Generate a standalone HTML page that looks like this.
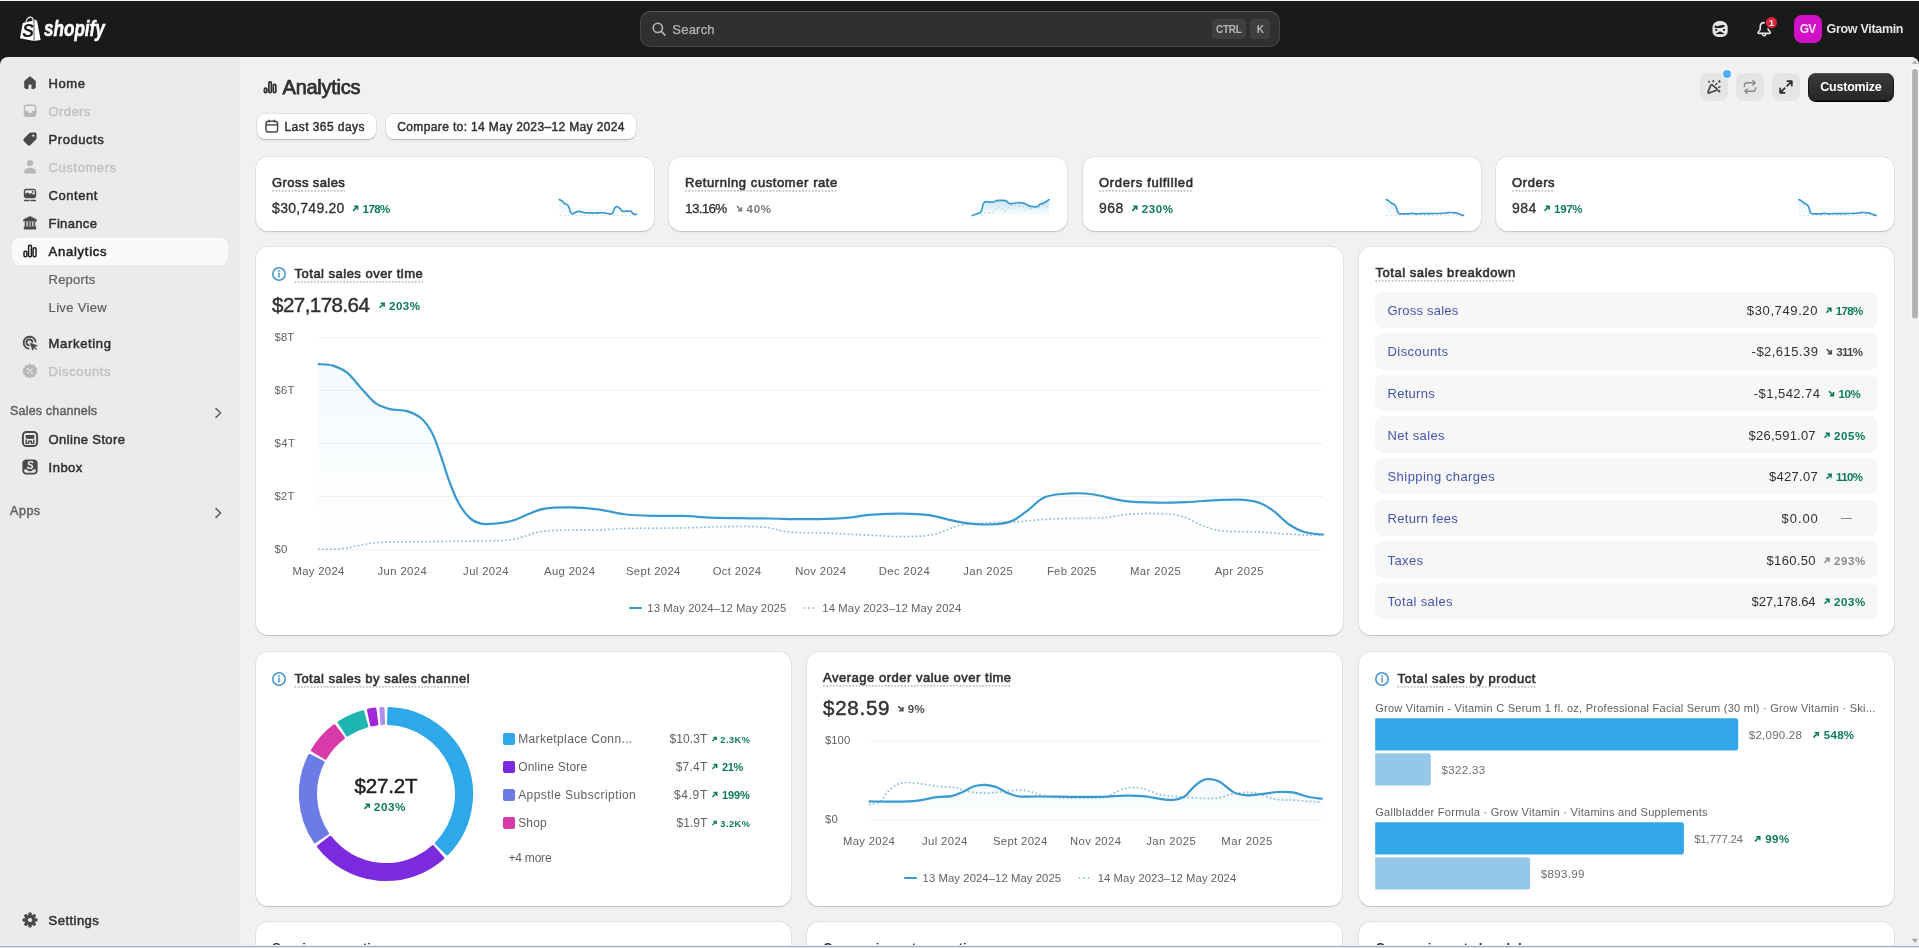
<!DOCTYPE html>
<html lang="en"><head><meta charset="utf-8"><title>Analytics - Shopify</title><style>
*{box-sizing:border-box;margin:0;padding:0}
html,body{width:1919px;height:948px;overflow:hidden;background:#f1f1f1;font-family:"Liberation Sans", sans-serif;}
#root{position:relative;width:1919px;height:948px;overflow:hidden;will-change:transform;}
.t{position:absolute;white-space:nowrap;line-height:1;}
.b{position:absolute;display:block;}
.card{position:absolute;background:#fff;border-radius:12px;box-shadow:0 1px 0 0 rgba(0,0,0,.09),0 0 0 1px rgba(0,0,0,.055),0 2px 3px rgba(0,0,0,.045);}
.dot{position:absolute;height:1.8px;background:repeating-linear-gradient(90deg,#c4c4c4 0,#c4c4c4 1.7px,transparent 1.7px,transparent 3.25px);}
</style></head><body><div id="root">
<div class="b" style="left:0px;top:0px;width:1919px;height:75px;background:#1a1a1a;"></div>
<div class="b" style="left:0px;top:57px;width:240px;height:891px;background:#ebebeb;border-top-left-radius:8px;"></div>
<div class="b" style="left:240px;top:57px;width:1673px;height:891px;background:#f1f1f1;"></div>
<div class="b" style="left:1905px;top:57px;width:14px;height:891px;background:#f1f1f1;border-top-right-radius:8px;"></div>
<header style="display:contents">
<div class="b" style="left:0px;top:0px;width:1919px;height:1px;background:#f6f6fa;"></div>
<svg class="b" style="left:19px;top:16px;" width="22" height="26" viewBox="0 0 22 26"><g transform="translate(0.60 0.40)"><path d="M3.2 6.6 L12.6 4.4 L14.2 3.2 L16.6 3.6 L17.6 5.2 L21 23.6 L14.4 24.6 L0.4 21.8 Z" fill="#fff"/><path d="M6.2 6.0 C6.6 2.6 9.4 0.2 11.6 0.8 C13.2 1.2 13.8 3.2 13.8 5.0" fill="none" stroke="#fff" stroke-width="1.1"/><path d="M14.3 3.3 L14.5 24.5" stroke="#1a1a1a" stroke-width="0.7"/><text x="2.6" y="20.2" font-family="Liberation Sans, sans-serif" font-weight="700" font-style="italic" font-size="17.5" fill="#1a1a1a">S</text></g></svg>
<span class="t" id="t1" style="font-size:20px;top:19.00px;color:#ffffff;font-weight:700;font-style:italic;-webkit-text-stroke:0.5px #ffffff;left:44.20px;transform:scale(0.855,1.07);transform-origin:0 85%;">shopify</span>
<div class="b" style="left:640px;top:11px;width:640px;height:36px;background:#303030;border-radius:10px;border:1px solid #444;border-top-color:#555;"></div>
<svg class="b" style="left:651px;top:21px;" width="16" height="16" viewBox="0 0 16 16"><circle cx="6.8" cy="6.9" r="4.6" fill="none" stroke="#b5b5b5" stroke-width="1.6"/><path d="M10.3 10.4 L14 14.1" stroke="#b5b5b5" stroke-width="1.6" stroke-linecap="round"/></svg>
<span class="t" id="t2" style="font-size:13px;top:23.00px;color:#b5b5b5;-webkit-text-stroke:0.25px #b5b5b5;letter-spacing:0.219px;left:672.30px;">Search</span>
<div class="b" style="left:1212px;top:19.2px;width:33.6px;height:19.6px;background:#3f3f3f;border-radius:4px;"></div>
<span class="t" id="t3" style="font-size:10px;top:25.00px;color:#b5b5b5;font-weight:700;letter-spacing:-0.191px;left:1215.90px;">CTRL</span>
<div class="b" style="left:1250.1px;top:19.2px;width:19.5px;height:19.6px;background:#3f3f3f;border-radius:4px;"></div>
<span class="t" id="t4" style="font-size:10px;top:25.00px;color:#b5b5b5;font-weight:700;left:1256.70px;">K</span>
<svg class="b" style="left:1712px;top:20px;" width="17" height="18" viewBox="0 0 17 18"><g transform="translate(0.10 0.50)"><path d="M8 0.6 C12.4 0.6 15.6 3 15.6 7.4 V10.4 C15.6 14.4 12.6 16.6 8 16.6 C3.4 16.6 0.4 14.4 0.4 10.4 V7.4 C0.4 3 3.6 0.6 8 0.6 Z" fill="#e6e6e6"/><path d="M2.2 6.8 C2.6 5.2 3.4 4.6 4 5.4 C5.4 6.6 8.4 4.2 11.6 4.6 C12.6 4.8 13 5.4 12.4 6 C10 7.6 6 7.8 3 7.2 Z" fill="#1a1a1a"/><circle cx="4.1" cy="9.4" r="1.05" fill="#1a1a1a"/><circle cx="11.9" cy="9.4" r="1.05" fill="#1a1a1a"/><path d="M3.4 12.8 C5 13.2 6.4 11 8 11 C9.6 11 11 13.2 12.6 12.8 C11.4 14.2 9.6 13.4 8 13.4 C6.4 13.4 4.6 14.2 3.4 12.8 Z" fill="#1a1a1a"/><path d="M7.3 14.2 H8.7 V15.6 H7.3 Z" fill="#bdbdbd"/></g></svg>
<svg class="b" style="left:1757px;top:21px;" width="15" height="17" viewBox="0 0 15 17"><g transform="translate(0.00 0.60)"><path d="M7.2 1 C4.6 1 3.2 2.9 3.2 5.4 V7.6 C3.2 9 1 9.8 1 11 C1 11.5 1.4 11.8 1.9 11.8 H12.5 C13 11.8 13.4 11.5 13.4 11 C13.4 9.8 11.2 9 11.2 7.6 V5.4 C11.2 2.9 9.8 1 7.2 1 Z" fill="none" stroke="#e6e6e6" stroke-width="1.6" stroke-linejoin="round"/><path d="M5.6 12 V12.8 C5.6 14.6 8.8 14.6 8.8 12.8 V12" fill="none" stroke="#e6e6e6" stroke-width="1.5" stroke-linecap="round"/></g></svg>
<div class="b" style="left:1765.9px;top:16.5px;width:11.2px;height:11.2px;background:#e0253a;border-radius:5.6px;box-shadow:0 0 0 1.2px #1a1a1a;"></div>
<span class="t" id="t5" style="font-size:9px;top:19.00px;color:#ffffff;font-weight:700;left:1771.40px;transform:translateX(-50%);margin-left:0.00px;">1</span>
<div class="b" style="left:1794px;top:15px;width:28px;height:28px;background:#d011c5;border-radius:8px;"></div>
<span class="t" id="t6" style="font-size:12px;top:23.00px;color:#fbe6fb;font-weight:700;letter-spacing:-0.944px;left:1808.00px;transform:translateX(-50%);margin-left:-0.47px;">GV</span>
<span class="t" id="t7" style="font-size:12.5px;top:23.00px;color:#e3e3e3;font-weight:700;letter-spacing:-0.304px;left:1826.50px;">Grow Vitamin</span>
</header>
<nav style="display:contents" aria-label="Main navigation">
<div class="b" style="left:12px;top:237.5px;width:216px;height:27.5px;background:#fafafa;border-radius:8px;"></div>
<svg class="b" style="left:22px;top:75px;overflow:visible;" width="16" height="16" viewBox="0 0 16 16"><g transform="translate(8 7.70) scale(0.9) translate(-8 -8)"><path d="M8 1.2 L2 6.2 V13 C2 13.9 2.7 14.6 3.6 14.6 H6 V10.6 C6 10 6.4 9.6 7 9.6 H9 C9.6 9.6 10 10 10 10.6 V14.6 H12.4 C13.3 14.6 14 13.9 14 13 V6.2 Z" fill="#4a4a4a" stroke="#4a4a4a" stroke-width="0.8" stroke-linejoin="round"/></g></svg>
<span class="t" id="t8" style="font-size:13px;top:77.00px;color:#303030;-webkit-text-stroke:0.5px #303030;letter-spacing:0.537px;left:48.60px;">Home</span>
<svg class="b" style="left:22px;top:103px;overflow:visible;" width="16" height="16" viewBox="0 0 16 16"><g transform="translate(8 7.80) scale(1.05) translate(-8 -8)"><path d="M4.4 2 H11.6 C12.9 2 14 3.1 14 4.4 V11.6 C14 12.9 12.9 14 11.6 14 H4.4 C3.1 14 2 12.9 2 11.6 V4.4 C2 3.1 3.1 2 4.4 2 Z M3.5 8.2 V4.6 C3.5 4 4 3.5 4.6 3.5 H11.4 C12 3.5 12.5 4 12.5 4.6 V8.2 H10.4 C10 8.2 9.8 8.4 9.7 8.8 C9.5 9.6 8.8 10.1 8 10.1 C7.2 10.1 6.5 9.6 6.3 8.8 C6.2 8.4 6 8.2 5.6 8.2 Z" fill="#b8b8b8" fill-rule="evenodd"/></g></svg>
<span class="t" id="t9" style="font-size:13px;top:105.00px;color:#c3c3c3;-webkit-text-stroke:0.5px #c3c3c3;letter-spacing:0.393px;left:48.60px;">Orders</span>
<svg class="b" style="left:22px;top:131px;overflow:visible;" width="16" height="16" viewBox="0 0 16 16"><g transform="translate(8 8.00) scale(1.1) translate(-8 -8)"><path d="M8.9 2 H12.6 C13.4 2 14 2.6 14 3.4 V7.1 C14 7.6 13.8 8.1 13.4 8.5 L8.4 13.5 C7.7 14.2 6.6 14.2 5.9 13.5 L2.5 10.1 C1.8 9.4 1.8 8.3 2.5 7.6 L7.5 2.6 C7.9 2.2 8.4 2 8.9 2 Z M11 4 A1 1 0 1 0 11 6 A1 1 0 1 0 11 4 Z" fill="#4a4a4a" fill-rule="evenodd"/></g></svg>
<span class="t" id="t10" style="font-size:13px;top:133.00px;color:#303030;-webkit-text-stroke:0.5px #303030;letter-spacing:0.541px;left:48.60px;">Products</span>
<svg class="b" style="left:22px;top:159px;overflow:visible;" width="16" height="16" viewBox="0 0 16 16"><g transform="translate(8 7.60) scale(1.06) translate(-8 -8)"><circle cx="8" cy="4.6" r="2.9" fill="#b8b8b8"/><path d="M2.4 13.2 C2.4 10.6 4.8 9 8 9 C11.2 9 13.6 10.6 13.6 13.2 C13.6 13.9 13.1 14.4 12.4 14.4 H3.6 C2.9 14.4 2.4 13.9 2.4 13.2 Z" fill="#b8b8b8"/></g></svg>
<span class="t" id="t11" style="font-size:13px;top:161.00px;color:#c3c3c3;-webkit-text-stroke:0.5px #c3c3c3;letter-spacing:0.580px;left:48.60px;">Customers</span>
<svg class="b" style="left:22px;top:187px;overflow:visible;" width="16" height="16" viewBox="0 0 16 16"><path d="M4.2 1.8 H11.8 C13.1 1.8 14.2 2.9 14.2 4.2 V8.8 C14.2 10.1 13.1 11.2 11.8 11.2 H4.2 C2.9 11.2 1.8 10.1 1.8 8.8 V4.2 C1.8 2.9 2.9 1.8 4.2 1.8 Z M3.3 7.2 L5.6 5.2 L7.6 6.9 L9.2 5.9 L12.7 8 V4.3 C12.7 3.7 12.3 3.3 11.7 3.3 H4.3 C3.7 3.3 3.3 3.7 3.3 4.3 Z M10.7 3.9 A0.9 0.9 0 1 0 10.7 5.7 A0.9 0.9 0 1 0 10.7 3.9 Z" fill="#4a4a4a" fill-rule="evenodd"/><path d="M2.6 13.6 H7 M9 13.6 H13.4" stroke="#4a4a4a" stroke-width="1.5" stroke-linecap="round"/></svg>
<span class="t" id="t12" style="font-size:13px;top:189.00px;color:#303030;-webkit-text-stroke:0.5px #303030;letter-spacing:0.526px;left:48.60px;">Content</span>
<svg class="b" style="left:22px;top:215px;overflow:visible;" width="16" height="16" viewBox="0 0 16 16"><path d="M8 1.4 L14.4 4.6 V6.2 H1.6 V4.6 Z" fill="#4a4a4a" stroke="#4a4a4a" stroke-width="0.6" stroke-linejoin="round"/><path d="M3.6 6.8 V11 M6.6 6.8 V11 M9.4 6.8 V11 M12.4 6.8 V11" stroke="#4a4a4a" stroke-width="1.7"/><rect x="1.8" y="11.2" width="12.4" height="3.2" rx="0.9" fill="#4a4a4a"/></svg>
<span class="t" id="t13" style="font-size:13px;top:217.00px;color:#303030;-webkit-text-stroke:0.5px #303030;letter-spacing:0.342px;left:48.60px;">Finance</span>
<svg class="b" style="left:22px;top:243px;overflow:visible;" width="16" height="16" viewBox="0 0 16 16"><rect x="2" y="8.2" width="2.9" height="5.6" rx="1.3" fill="none" stroke="#1f1f1f" stroke-width="1.5"/><rect x="6.55" y="2.2" width="2.9" height="11.6" rx="1.3" fill="none" stroke="#1f1f1f" stroke-width="1.5"/><rect x="11.1" y="4.8" width="2.9" height="9" rx="1.3" fill="none" stroke="#1f1f1f" stroke-width="1.5"/></svg>
<span class="t" id="t14" style="font-size:13px;top:245.00px;color:#202020;-webkit-text-stroke:0.5px #202020;letter-spacing:0.746px;left:48.60px;">Analytics</span>
<span class="t" id="t15" style="font-size:13px;top:273.00px;color:#616161;-webkit-text-stroke:0.2px #616161;letter-spacing:0.178px;left:48.60px;">Reports</span>
<span class="t" id="t16" style="font-size:13px;top:301.00px;color:#616161;-webkit-text-stroke:0.2px #616161;letter-spacing:0.324px;left:48.60px;">Live View</span>
<svg class="b" style="left:22px;top:335px;overflow:visible;" width="16" height="16" viewBox="0 0 16 16"><path d="M13.6 6.6 A6 6 0 1 0 6.6 13.6" fill="none" stroke="#4a4a4a" stroke-width="1.9" stroke-linecap="round"/><path d="M10.4 6.8 A3 3 0 1 0 6.8 10.4" fill="none" stroke="#4a4a4a" stroke-width="1.9" stroke-linecap="round"/><path d="M8 8 L15.4 10.6 L12.6 12 L14.8 14.2 L14.2 14.8 L12 12.6 L10.6 15.4 Z" fill="#4a4a4a" stroke="#4a4a4a" stroke-width="0.5" stroke-linejoin="round"/></svg>
<span class="t" id="t17" style="font-size:13px;top:337.00px;color:#303030;-webkit-text-stroke:0.5px #303030;letter-spacing:0.665px;left:48.60px;">Marketing</span>
<svg class="b" style="left:22px;top:363px;overflow:visible;" width="16" height="16" viewBox="0 0 16 16"><path d="M8 0.8 L9.9 2.2 L12.2 2 L12.9 4.3 L14.9 5.5 L14.2 7.8 L15 10 L13.1 11.3 L12.5 13.6 L10.2 13.6 L8.3 15 L6.3 13.7 L4 13.9 L3.2 11.7 L1.2 10.5 L1.8 8.2 L1 6 L2.9 4.7 L3.5 2.4 L5.8 2.4 Z" fill="#b8b8b8" stroke="#b8b8b8" stroke-width="0.8" stroke-linejoin="round"/><path d="M5.8 10.2 L10.2 5.8" stroke="#ebebeb" stroke-width="1.2" stroke-linecap="round"/><circle cx="6" cy="6.1" r="1" fill="#ebebeb"/><circle cx="10" cy="9.9" r="1" fill="#ebebeb"/></svg>
<span class="t" id="t18" style="font-size:13px;top:365.00px;color:#c3c3c3;-webkit-text-stroke:0.5px #c3c3c3;letter-spacing:0.615px;left:48.60px;">Discounts</span>
<span class="t" id="t19" style="font-size:12.5px;top:405.00px;color:#616161;-webkit-text-stroke:0.45px #616161;letter-spacing:0.171px;left:10.10px;">Sales channels</span>
<svg class="b" style="left:212px;top:406px;" width="12" height="14" viewBox="0 0 12 14"><path d="M4 2.6 L8.6 7 L4 11.4" fill="none" stroke="#616161" stroke-width="1.5" stroke-linecap="round" stroke-linejoin="round"/></svg>
<svg class="b" style="left:22px;top:431px;overflow:visible;" width="16" height="16" viewBox="0 0 16 16"><rect x="0.9" y="0.9" width="14.2" height="14.2" rx="3.6" fill="none" stroke="#4a4a4a" stroke-width="2"/><path d="M3.6 4 H12.4 V6.6 C12.4 7.6 11.4 8 10.9 7.4 C10.4 8.2 9.4 8.2 8.9 7.4 C8.4 8.2 7.5 8.2 7 7.4 C6.5 8.2 5.6 8.2 5.1 7.4 C4.6 8 3.6 7.6 3.6 6.6 Z" fill="#4a4a4a"/><path d="M4.2 8.4 V12.4 H6.6 V10.2 H9.4 V12.4 H11.8 V8.4" fill="none" stroke="#4a4a4a" stroke-width="1.4"/></svg>
<span class="t" id="t20" style="font-size:13px;top:433.00px;color:#303030;-webkit-text-stroke:0.5px #303030;letter-spacing:0.367px;left:48.60px;">Online Store</span>
<svg class="b" style="left:22px;top:459px;overflow:visible;" width="16" height="16" viewBox="0 0 16 16"><path d="M4.2 0.4 H11.8 C13.9 0.4 15.6 2.1 15.6 4.2 V11.8 C15.6 13.9 13.9 15.6 11.8 15.6 H4.2 C2.1 15.6 0.4 13.9 0.4 11.8 V4.2 C0.4 2.1 2.1 0.4 4.2 0.4 Z" fill="#4a4a4a"/><path d="M2.2 10.4 H5 C5.4 11.6 6.6 12.2 8 12.2 C9.4 12.2 10.6 11.6 11 10.4 H13.8 V11.8 C13.8 12.9 12.9 13.8 11.8 13.8 H4.2 C3.1 13.8 2.2 12.9 2.2 11.8 Z" fill="#ebebeb"/><text x="4.7" y="9.6" font-family="Liberation Sans, sans-serif" font-weight="700" font-style="italic" font-size="10.4" fill="#ebebeb">S</text></svg>
<span class="t" id="t21" style="font-size:13px;top:461.00px;color:#303030;-webkit-text-stroke:0.5px #303030;letter-spacing:0.472px;left:48.60px;">Inbox</span>
<span class="t" id="t22" style="font-size:12.5px;top:505.00px;color:#616161;-webkit-text-stroke:0.45px #616161;letter-spacing:0.500px;left:10.10px;">Apps</span>
<svg class="b" style="left:212px;top:506px;" width="12" height="14" viewBox="0 0 12 14"><path d="M4 2.6 L8.6 7 L4 11.4" fill="none" stroke="#616161" stroke-width="1.5" stroke-linecap="round" stroke-linejoin="round"/></svg>
<svg class="b" style="left:22px;top:912px;overflow:visible;" width="16" height="16" viewBox="0 0 16 16"><g transform="translate(8 8)"><rect x="-1.7" y="-7.4" width="3.4" height="4" rx="0.9" fill="#4a4a4a" transform="rotate(0)"/><rect x="-1.7" y="-7.4" width="3.4" height="4" rx="0.9" fill="#4a4a4a" transform="rotate(45)"/><rect x="-1.7" y="-7.4" width="3.4" height="4" rx="0.9" fill="#4a4a4a" transform="rotate(90)"/><rect x="-1.7" y="-7.4" width="3.4" height="4" rx="0.9" fill="#4a4a4a" transform="rotate(135)"/><rect x="-1.7" y="-7.4" width="3.4" height="4" rx="0.9" fill="#4a4a4a" transform="rotate(180)"/><rect x="-1.7" y="-7.4" width="3.4" height="4" rx="0.9" fill="#4a4a4a" transform="rotate(225)"/><rect x="-1.7" y="-7.4" width="3.4" height="4" rx="0.9" fill="#4a4a4a" transform="rotate(270)"/><rect x="-1.7" y="-7.4" width="3.4" height="4" rx="0.9" fill="#4a4a4a" transform="rotate(315)"/><circle r="5.2" fill="#4a4a4a"/><circle r="2.1" fill="#ebebeb"/></g></svg>
<span class="t" id="t23" style="font-size:13px;top:914.00px;color:#303030;-webkit-text-stroke:0.5px #303030;letter-spacing:0.459px;left:48.60px;">Settings</span>
</nav>
<main style="display:contents">
<svg class="b" style="left:262px;top:79px;" width="16" height="16" viewBox="0 0 16 16"><g transform="translate(0.50 0.50)"><rect x="1.9" y="8.6" width="2.5" height="4.6" rx="1.2" fill="none" stroke="#303030" stroke-width="1.7"/><rect x="6.35" y="2.3" width="2.5" height="10.9" rx="1.2" fill="none" stroke="#303030" stroke-width="1.7"/><rect x="10.8" y="4.9" width="2.5" height="8.3" rx="1.2" fill="none" stroke="#303030" stroke-width="1.7"/></g></svg>
<span class="t" id="t24" style="font-size:20px;top:77.00px;color:#303030;-webkit-text-stroke:0.75px #303030;letter-spacing:-0.279px;left:282.60px;">Analytics</span>
<div class="b" style="left:257.3px;top:114.3px;width:118.4px;height:25px;background:#ffffff;border-radius:8px;box-shadow:0 1px 0 0 rgba(0,0,0,.12),0 0 0 1px rgba(0,0,0,.065),0 2px 2px rgba(0,0,0,.05);"></div>
<svg class="b" style="left:264px;top:119px;" width="15" height="15" viewBox="0 0 15 15"><g transform="translate(0.80 0.30)"><rect x="1.2" y="2" width="11.6" height="10.8" rx="2.6" fill="none" stroke="#4a4a4a" stroke-width="1.5"/><path d="M1.4 5.6 H12.6" stroke="#4a4a4a" stroke-width="1.4"/><path d="M4.3 0.9 V2.6 M9.7 0.9 V2.6" stroke="#4a4a4a" stroke-width="1.4" stroke-linecap="round"/></g></svg>
<span class="t" id="t25" style="font-size:12px;top:121.00px;color:#303030;-webkit-text-stroke:0.45px #303030;letter-spacing:0.440px;left:284.50px;">Last 365 days</span>
<div class="b" style="left:385.8px;top:114.3px;width:250.4px;height:25px;background:#ffffff;border-radius:8px;box-shadow:0 1px 0 0 rgba(0,0,0,.12),0 0 0 1px rgba(0,0,0,.065),0 2px 2px rgba(0,0,0,.05);"></div>
<span class="t" id="t26" style="font-size:12px;top:121.00px;color:#303030;-webkit-text-stroke:0.45px #303030;letter-spacing:0.364px;left:397.30px;">Compare to: 14 May 2023–12 May 2024</span>
<div class="b" style="left:1700px;top:73px;width:28px;height:27.6px;background:#e5e5e5;border-radius:8px;"></div>
<div class="b" style="left:1736px;top:73px;width:28px;height:27.6px;background:#e5e5e5;border-radius:8px;"></div>
<div class="b" style="left:1772px;top:73px;width:28px;height:27.6px;background:#e5e5e5;border-radius:8px;"></div>
<svg class="b" style="left:1706px;top:79px;" width="16" height="16" viewBox="0 0 16 16"><path d="M4.7 6.4 L2.1 12.9 C1.8 13.7 2.5 14.3 3.2 14 L10.4 11.3 C11.2 11 11.3 10.1 10.7 9.6 L6.2 5.9 C5.7 5.5 4.9 5.7 4.7 6.4 Z" fill="none" stroke="#444" stroke-width="1.7" stroke-linejoin="round"/><circle cx="3.1" cy="2.7" r="0.95" fill="#444"/><path d="M7.4 1.5 L7.1 2.9" stroke="#444" stroke-width="1.4" stroke-linecap="round"/><path d="M10.8 4.5 L9.8 5.5" stroke="#444" stroke-width="1.4" stroke-linecap="round"/><path d="M12.6 8.2 L14 7.9" stroke="#444" stroke-width="1.4" stroke-linecap="round"/><path d="M13.4 0.9 L14.9 2.5 L13.4 4.1 L11.9 2.5 Z" fill="#444"/><path d="M13.1 10.6 L14.7 12.2 L13.1 13.8 L11.5 12.2 Z" fill="#444"/></svg>
<div class="b" style="left:1723.1px;top:70px;width:7.8px;height:7.8px;background:#4fb0f5;border-radius:4px;box-shadow:0 0 0 1.3px #f7f7f7;"></div>
<svg class="b" style="left:1742px;top:79px;" width="16" height="16" viewBox="0 0 16 16"><path d="M2.4 7.4 V6.4 C2.4 4.9 3.6 3.7 5.1 3.7 H13 M10.8 1.4 L13.2 3.7 L10.8 6" fill="none" stroke="#8a8a8a" stroke-width="1.4" stroke-linecap="round" stroke-linejoin="round"/><path d="M13.6 8.6 V9.6 C13.6 11.1 12.4 12.3 10.9 12.3 H3 M5.2 10 L2.8 12.3 L5.2 14.6" fill="none" stroke="#8a8a8a" stroke-width="1.4" stroke-linecap="round" stroke-linejoin="round"/></svg>
<svg class="b" style="left:1778px;top:79px;" width="16" height="16" viewBox="0 0 16 16"><path d="M9.2 6.8 L13.6 2.4 M9.4 2.2 H13.8 V6.6" fill="none" stroke="#303030" stroke-width="1.8" stroke-linecap="round" stroke-linejoin="round"/><path d="M6.8 9.2 L2.4 13.6 M2.2 9.4 V13.8 H6.6" fill="none" stroke="#303030" stroke-width="1.8" stroke-linecap="round" stroke-linejoin="round"/></svg>
<div class="b" style="left:1808px;top:73px;width:86px;height:28px;background:#2b2b2b;border-radius:8px;background:linear-gradient(#3a3a3a,#262626);box-shadow:inset 0 1px 0 rgba(255,255,255,.25),inset 0 0 0 1px rgba(0,0,0,.55),0 1px 0 #000;"></div>
<span class="t" id="t27" style="font-size:12.5px;top:81.00px;color:#ffffff;font-weight:700;letter-spacing:-0.213px;left:1851.00px;transform:translateX(-50%);margin-left:-0.11px;">Customize</span>
<div class="card" style="left:256px;top:157px;width:398px;height:74px"></div>
<span class="t" id="t28" style="font-size:13px;top:176.00px;color:#303030;-webkit-text-stroke:0.6px #303030;letter-spacing:0.406px;left:272.10px;">Gross sales</span>
<svg class="b" style="left:272px;top:190px;" width="73" height="2" viewBox="0 0 73 2"><g transform="translate(0.10 0.00)"><path d="M0 0.9 H72.70" stroke="#c2c2c2" stroke-width="1.8" stroke-dasharray="1.7 1.55"/></g></svg>
<span class="t" id="t29" style="font-size:14px;top:201.00px;color:#303030;-webkit-text-stroke:0.3px #303030;letter-spacing:0.247px;left:272.10px;">$30,749.20</span>
<svg class="b" style="left:352px;top:205px;" width="7" height="7" viewBox="0 0 7 7"><g transform="translate(0.60 0.50)"><path d="M0.9 4.90 L4.50 1.3" fill="none" stroke="#0c7d52" stroke-width="1.55" stroke-linecap="round"/><path d="M1.5 0.8 H5.00 V4.30" fill="none" stroke="#0c7d52" stroke-width="1.65" stroke-linecap="butt" stroke-linejoin="miter"/></g></svg>
<span class="t" id="t30" style="font-size:11.5px;top:204.00px;color:#0c7d52;font-weight:700;letter-spacing:-0.607px;left:362.60px;">178%</span>
<svg class="b" style="left:559px;top:199px;overflow:visible;" width="78" height="19" viewBox="0 0 78 19"><g transform="translate(0.30 0.60)"><defs><linearGradient id="sg559" x1="0" y1="0" x2="0" y2="1"><stop offset="0" stop-color="#4aa6dc" stop-opacity="0.16"/><stop offset="1" stop-color="#4aa6dc" stop-opacity=".02"/></linearGradient></defs><path d="M0.00 0.00C0.39 0.17 1.48 0.39 2.35 1.04C3.22 1.69 4.26 3.21 5.22 3.91C6.17 4.60 7.35 4.60 8.09 5.21C8.82 5.82 9.17 6.47 9.65 7.56C10.13 8.65 10.52 10.69 10.95 11.73C11.39 12.77 11.74 13.42 12.26 13.81C12.78 14.21 13.43 14.25 14.08 14.08C14.74 13.90 15.34 13.16 16.17 12.77C17.00 12.38 18.13 11.86 19.04 11.73C19.95 11.60 20.69 11.77 21.65 11.99C22.60 12.21 23.56 12.82 24.78 13.03C25.99 13.25 27.56 13.22 28.95 13.29C30.34 13.36 31.65 13.45 33.12 13.45C34.60 13.45 36.34 13.35 37.82 13.29C39.30 13.24 40.77 13.14 41.99 13.14C43.21 13.14 43.99 13.14 45.12 13.29C46.25 13.45 47.64 13.90 48.77 14.08C49.90 14.25 51.12 14.47 51.90 14.34C52.68 14.21 52.94 14.16 53.47 13.29C53.99 12.42 54.47 10.15 55.03 9.12C55.60 8.10 56.25 7.45 56.86 7.14C57.47 6.84 58.03 6.97 58.68 7.30C59.33 7.63 60.07 8.43 60.77 9.12C61.46 9.82 62.07 11.03 62.86 11.47C63.64 11.90 64.42 11.73 65.46 11.73C66.51 11.73 68.07 11.49 69.11 11.47C70.16 11.45 70.94 11.19 71.72 11.63C72.51 12.06 72.90 13.54 73.81 14.08C74.72 14.61 76.63 14.73 77.20 14.86L77.20 15.90L0.00 15.90Z" fill="url(#sg559)"/><path d="M0.6 16.10 H77.20" stroke="#b9c3cc" stroke-width="1.1" stroke-dasharray="1.2 2.9"/><path d="M0.00 0.00C0.39 0.17 1.48 0.39 2.35 1.04C3.22 1.69 4.26 3.21 5.22 3.91C6.17 4.60 7.35 4.60 8.09 5.21C8.82 5.82 9.17 6.47 9.65 7.56C10.13 8.65 10.52 10.69 10.95 11.73C11.39 12.77 11.74 13.42 12.26 13.81C12.78 14.21 13.43 14.25 14.08 14.08C14.74 13.90 15.34 13.16 16.17 12.77C17.00 12.38 18.13 11.86 19.04 11.73C19.95 11.60 20.69 11.77 21.65 11.99C22.60 12.21 23.56 12.82 24.78 13.03C25.99 13.25 27.56 13.22 28.95 13.29C30.34 13.36 31.65 13.45 33.12 13.45C34.60 13.45 36.34 13.35 37.82 13.29C39.30 13.24 40.77 13.14 41.99 13.14C43.21 13.14 43.99 13.14 45.12 13.29C46.25 13.45 47.64 13.90 48.77 14.08C49.90 14.25 51.12 14.47 51.90 14.34C52.68 14.21 52.94 14.16 53.47 13.29C53.99 12.42 54.47 10.15 55.03 9.12C55.60 8.10 56.25 7.45 56.86 7.14C57.47 6.84 58.03 6.97 58.68 7.30C59.33 7.63 60.07 8.43 60.77 9.12C61.46 9.82 62.07 11.03 62.86 11.47C63.64 11.90 64.42 11.73 65.46 11.73C66.51 11.73 68.07 11.49 69.11 11.47C70.16 11.45 70.94 11.19 71.72 11.63C72.51 12.06 72.90 13.54 73.81 14.08C74.72 14.61 76.63 14.73 77.20 14.86" fill="none" stroke="#3a9ad0" stroke-width="1.7" stroke-linejoin="round" stroke-linecap="round"/></g></svg>
<div class="card" style="left:669px;top:157px;width:398px;height:74px"></div>
<span class="t" id="t31" style="font-size:13px;top:176.00px;color:#303030;-webkit-text-stroke:0.6px #303030;letter-spacing:0.579px;left:685.10px;">Returning customer rate</span>
<svg class="b" style="left:685px;top:190px;" width="153" height="2" viewBox="0 0 153 2"><g transform="translate(0.10 0.00)"><path d="M0 0.9 H152.20" stroke="#c2c2c2" stroke-width="1.8" stroke-dasharray="1.7 1.55"/></g></svg>
<span class="t" id="t32" style="font-size:13.5px;top:202.00px;color:#303030;-webkit-text-stroke:0.3px #303030;letter-spacing:-0.719px;left:685.10px;">13.16%</span>
<svg class="b" style="left:736px;top:205px;" width="7" height="7" viewBox="0 0 7 7"><g transform="translate(0.50 0.70)"><path d="M0.9 0.9 L4.50 4.50" fill="none" stroke="#7a7a7a" stroke-width="1.55" stroke-linecap="round"/><path d="M1.5 5.00 H5.00 V1.5" fill="none" stroke="#7a7a7a" stroke-width="1.65" stroke-linecap="butt" stroke-linejoin="miter"/></g></svg>
<span class="t" id="t33" style="font-size:11.5px;top:204.00px;color:#7a7a7a;font-weight:700;letter-spacing:0.784px;left:746.50px;">40%</span>
<svg class="b" style="left:972px;top:199px;overflow:visible;" width="78" height="19" viewBox="0 0 78 19"><g transform="translate(0.20 0.60)"><defs><linearGradient id="sg972" x1="0" y1="0" x2="0" y2="1"><stop offset="0" stop-color="#4aa6dc" stop-opacity="0.3"/><stop offset="1" stop-color="#4aa6dc" stop-opacity=".02"/></linearGradient></defs><path d="M0.00 15.90C0.83 15.60 3.61 14.55 4.95 14.08C6.30 13.60 7.30 13.77 8.08 13.03C8.86 12.29 9.17 11.08 9.65 9.64C10.12 8.21 10.43 5.66 10.95 4.43C11.47 3.20 11.77 2.59 12.77 2.24C13.77 1.89 15.55 2.29 16.94 2.35C18.33 2.41 19.90 2.82 21.11 2.61C22.33 2.39 23.03 1.35 24.24 1.04C25.46 0.74 26.85 0.78 28.41 0.78C29.98 0.78 32.41 0.70 33.63 1.04C34.84 1.39 35.02 2.37 35.71 2.87C36.41 3.36 36.76 3.88 37.80 4.01C38.84 4.14 40.75 3.80 41.97 3.65C43.19 3.50 43.88 3.19 45.10 3.13C46.31 3.07 47.88 3.11 49.27 3.28C50.66 3.46 52.40 3.76 53.44 4.17C54.48 4.58 54.66 5.30 55.52 5.73C56.39 6.17 57.44 6.56 58.65 6.78C59.87 6.99 61.69 7.01 62.82 7.04C63.95 7.06 64.56 7.37 65.43 6.93C66.30 6.50 67.08 4.98 68.04 4.43C68.99 3.88 70.21 4.04 71.17 3.65C72.12 3.26 72.82 2.69 73.77 2.09C74.73 1.48 76.38 0.35 76.90 0.00L76.90 15.90L0.00 15.90Z" fill="url(#sg972)"/><path d="M9.12 15.90C9.65 15.47 11.08 13.75 12.25 13.29C13.42 12.84 14.82 13.23 16.16 13.19C17.51 13.15 19.20 13.55 20.33 13.03C21.46 12.51 22.07 11.04 22.94 10.06C23.81 9.08 24.50 7.34 25.55 7.14C26.59 6.94 28.11 8.10 29.20 8.86C30.28 9.63 31.11 11.58 32.06 11.73C33.02 11.88 33.98 10.62 34.93 9.75C35.89 8.88 36.63 7.19 37.80 6.52C38.97 5.85 40.62 5.89 41.97 5.73C43.32 5.58 44.58 5.40 45.88 5.58C47.18 5.75 48.44 6.45 49.79 6.78C51.14 7.11 52.70 7.19 53.96 7.56C55.22 7.93 56.05 8.89 57.35 9.02C58.65 9.15 60.17 8.58 61.78 8.34C63.39 8.10 65.17 7.99 66.99 7.56C68.82 7.12 71.21 5.69 72.73 5.73C74.25 5.78 75.55 7.47 76.12 7.82" fill="none" stroke="#a9bccb" stroke-width="1.1" stroke-dasharray="1.2 2.9"/><path d="M0.00 15.90C0.83 15.60 3.61 14.55 4.95 14.08C6.30 13.60 7.30 13.77 8.08 13.03C8.86 12.29 9.17 11.08 9.65 9.64C10.12 8.21 10.43 5.66 10.95 4.43C11.47 3.20 11.77 2.59 12.77 2.24C13.77 1.89 15.55 2.29 16.94 2.35C18.33 2.41 19.90 2.82 21.11 2.61C22.33 2.39 23.03 1.35 24.24 1.04C25.46 0.74 26.85 0.78 28.41 0.78C29.98 0.78 32.41 0.70 33.63 1.04C34.84 1.39 35.02 2.37 35.71 2.87C36.41 3.36 36.76 3.88 37.80 4.01C38.84 4.14 40.75 3.80 41.97 3.65C43.19 3.50 43.88 3.19 45.10 3.13C46.31 3.07 47.88 3.11 49.27 3.28C50.66 3.46 52.40 3.76 53.44 4.17C54.48 4.58 54.66 5.30 55.52 5.73C56.39 6.17 57.44 6.56 58.65 6.78C59.87 6.99 61.69 7.01 62.82 7.04C63.95 7.06 64.56 7.37 65.43 6.93C66.30 6.50 67.08 4.98 68.04 4.43C68.99 3.88 70.21 4.04 71.17 3.65C72.12 3.26 72.82 2.69 73.77 2.09C74.73 1.48 76.38 0.35 76.90 0.00" fill="none" stroke="#3a9ad0" stroke-width="1.7" stroke-linejoin="round" stroke-linecap="round"/></g></svg>
<div class="card" style="left:1083px;top:157px;width:398px;height:74px"></div>
<span class="t" id="t34" style="font-size:13px;top:176.00px;color:#303030;-webkit-text-stroke:0.6px #303030;letter-spacing:0.666px;left:1099.10px;">Orders fulfilled</span>
<svg class="b" style="left:1099px;top:190px;" width="94" height="2" viewBox="0 0 94 2"><g transform="translate(0.10 0.00)"><path d="M0 0.9 H93.80" stroke="#c2c2c2" stroke-width="1.8" stroke-dasharray="1.7 1.55"/></g></svg>
<span class="t" id="t35" style="font-size:14px;top:201.00px;color:#303030;-webkit-text-stroke:0.3px #303030;letter-spacing:0.470px;left:1099.10px;">968</span>
<svg class="b" style="left:1131px;top:205px;" width="7" height="7" viewBox="0 0 7 7"><g transform="translate(0.80 0.50)"><path d="M0.9 4.90 L4.50 1.3" fill="none" stroke="#0c7d52" stroke-width="1.55" stroke-linecap="round"/><path d="M1.5 0.8 H5.00 V4.30" fill="none" stroke="#0c7d52" stroke-width="1.65" stroke-linecap="butt" stroke-linejoin="miter"/></g></svg>
<span class="t" id="t36" style="font-size:11.5px;top:204.00px;color:#0c7d52;font-weight:700;letter-spacing:0.626px;left:1141.80px;">230%</span>
<svg class="b" style="left:1386px;top:199px;overflow:visible;" width="78" height="19" viewBox="0 0 78 19"><g transform="translate(0.30 0.60)"><defs><linearGradient id="sg1386" x1="0" y1="0" x2="0" y2="1"><stop offset="0" stop-color="#4aa6dc" stop-opacity="0.16"/><stop offset="1" stop-color="#4aa6dc" stop-opacity=".02"/></linearGradient></defs><path d="M0.00 0.00C0.39 0.17 1.52 0.48 2.35 1.04C3.17 1.61 4.00 2.74 4.96 3.39C5.91 4.04 7.30 4.34 8.09 4.95C8.87 5.56 9.17 6.00 9.65 7.04C10.13 8.08 10.52 10.08 10.95 11.21C11.39 12.34 11.61 13.29 12.26 13.81C12.91 14.34 13.39 14.27 14.87 14.34C16.34 14.41 19.39 14.32 21.13 14.23C22.86 14.14 23.82 13.81 25.30 13.81C26.78 13.81 28.34 14.19 29.99 14.23C31.65 14.28 33.04 14.10 35.21 14.08C37.38 14.05 40.43 14.10 43.03 14.08C45.64 14.05 48.68 13.98 50.86 13.92C53.03 13.86 54.42 13.83 56.07 13.71C57.73 13.59 59.38 13.33 60.77 13.19C62.16 13.05 63.03 12.86 64.42 12.88C65.81 12.89 67.81 13.09 69.11 13.29C70.42 13.49 71.29 13.75 72.24 14.08C73.20 14.41 74.03 14.99 74.85 15.27C75.68 15.56 76.81 15.71 77.20 15.80L77.20 15.90L0.00 15.90Z" fill="url(#sg1386)"/><path d="M0.6 16.10 H77.20" stroke="#b9c3cc" stroke-width="1.1" stroke-dasharray="1.2 2.9"/><path d="M0.00 0.00C0.39 0.17 1.52 0.48 2.35 1.04C3.17 1.61 4.00 2.74 4.96 3.39C5.91 4.04 7.30 4.34 8.09 4.95C8.87 5.56 9.17 6.00 9.65 7.04C10.13 8.08 10.52 10.08 10.95 11.21C11.39 12.34 11.61 13.29 12.26 13.81C12.91 14.34 13.39 14.27 14.87 14.34C16.34 14.41 19.39 14.32 21.13 14.23C22.86 14.14 23.82 13.81 25.30 13.81C26.78 13.81 28.34 14.19 29.99 14.23C31.65 14.28 33.04 14.10 35.21 14.08C37.38 14.05 40.43 14.10 43.03 14.08C45.64 14.05 48.68 13.98 50.86 13.92C53.03 13.86 54.42 13.83 56.07 13.71C57.73 13.59 59.38 13.33 60.77 13.19C62.16 13.05 63.03 12.86 64.42 12.88C65.81 12.89 67.81 13.09 69.11 13.29C70.42 13.49 71.29 13.75 72.24 14.08C73.20 14.41 74.03 14.99 74.85 15.27C75.68 15.56 76.81 15.71 77.20 15.80" fill="none" stroke="#3a9ad0" stroke-width="1.7" stroke-linejoin="round" stroke-linecap="round"/></g></svg>
<div class="card" style="left:1496px;top:157px;width:398px;height:74px"></div>
<span class="t" id="t37" style="font-size:13px;top:176.00px;color:#303030;-webkit-text-stroke:0.6px #303030;letter-spacing:0.553px;left:1512.10px;">Orders</span>
<svg class="b" style="left:1512px;top:190px;" width="43" height="2" viewBox="0 0 43 2"><g transform="translate(0.10 0.00)"><path d="M0 0.9 H42.50" stroke="#c2c2c2" stroke-width="1.8" stroke-dasharray="1.7 1.55"/></g></svg>
<span class="t" id="t38" style="font-size:14px;top:201.00px;color:#303030;-webkit-text-stroke:0.3px #303030;letter-spacing:0.470px;left:1512.10px;">984</span>
<svg class="b" style="left:1544px;top:205px;" width="6" height="7" viewBox="0 0 6 7"><g transform="translate(0.10 0.50)"><path d="M0.9 4.90 L4.50 1.3" fill="none" stroke="#0c7d52" stroke-width="1.55" stroke-linecap="round"/><path d="M1.5 0.8 H5.00 V4.30" fill="none" stroke="#0c7d52" stroke-width="1.65" stroke-linecap="butt" stroke-linejoin="miter"/></g></svg>
<span class="t" id="t39" style="font-size:11.5px;top:204.00px;color:#0c7d52;font-weight:700;letter-spacing:-0.341px;left:1554.10px;">197%</span>
<svg class="b" style="left:1798px;top:199px;overflow:visible;" width="79" height="19" viewBox="0 0 79 19"><g transform="translate(0.90 0.60)"><defs><linearGradient id="sg1798" x1="0" y1="0" x2="0" y2="1"><stop offset="0" stop-color="#4aa6dc" stop-opacity="0.16"/><stop offset="1" stop-color="#4aa6dc" stop-opacity=".02"/></linearGradient></defs><path d="M0.00 0.00C0.39 0.17 1.52 0.48 2.35 1.04C3.17 1.61 4.00 2.74 4.96 3.39C5.91 4.04 7.30 4.34 8.09 4.95C8.87 5.56 9.17 6.00 9.65 7.04C10.13 8.08 10.52 10.08 10.95 11.21C11.39 12.34 11.61 13.29 12.26 13.81C12.91 14.34 13.39 14.27 14.87 14.34C16.34 14.41 19.39 14.32 21.13 14.23C22.86 14.14 23.82 13.81 25.30 13.81C26.78 13.81 28.34 14.19 29.99 14.23C31.65 14.28 33.04 14.10 35.21 14.08C37.38 14.05 40.43 14.10 43.03 14.08C45.64 14.05 48.68 13.98 50.86 13.92C53.03 13.86 54.42 13.83 56.07 13.71C57.73 13.59 59.38 13.33 60.77 13.19C62.16 13.05 63.03 12.86 64.42 12.88C65.81 12.89 67.81 13.09 69.11 13.29C70.42 13.49 71.29 13.75 72.24 14.08C73.20 14.41 74.03 14.99 74.85 15.27C75.68 15.56 76.81 15.71 77.20 15.80L77.20 15.90L0.00 15.90Z" fill="url(#sg1798)"/><path d="M0.6 16.10 H77.20" stroke="#b9c3cc" stroke-width="1.1" stroke-dasharray="1.2 2.9"/><path d="M0.00 0.00C0.39 0.17 1.52 0.48 2.35 1.04C3.17 1.61 4.00 2.74 4.96 3.39C5.91 4.04 7.30 4.34 8.09 4.95C8.87 5.56 9.17 6.00 9.65 7.04C10.13 8.08 10.52 10.08 10.95 11.21C11.39 12.34 11.61 13.29 12.26 13.81C12.91 14.34 13.39 14.27 14.87 14.34C16.34 14.41 19.39 14.32 21.13 14.23C22.86 14.14 23.82 13.81 25.30 13.81C26.78 13.81 28.34 14.19 29.99 14.23C31.65 14.28 33.04 14.10 35.21 14.08C37.38 14.05 40.43 14.10 43.03 14.08C45.64 14.05 48.68 13.98 50.86 13.92C53.03 13.86 54.42 13.83 56.07 13.71C57.73 13.59 59.38 13.33 60.77 13.19C62.16 13.05 63.03 12.86 64.42 12.88C65.81 12.89 67.81 13.09 69.11 13.29C70.42 13.49 71.29 13.75 72.24 14.08C73.20 14.41 74.03 14.99 74.85 15.27C75.68 15.56 76.81 15.71 77.20 15.80" fill="none" stroke="#3a9ad0" stroke-width="1.7" stroke-linejoin="round" stroke-linecap="round"/></g></svg>
<div class="card" style="left:256px;top:247px;width:1087px;height:388px"></div>
<svg class="b" style="left:271px;top:266px;" width="16" height="16" viewBox="0 0 16 16"><circle cx="8" cy="8" r="6.2" fill="none" stroke="#4497cd" stroke-width="1.6"/><path d="M8 7.3 V11.1" stroke="#4497cd" stroke-width="1.5" stroke-linecap="round"/><circle cx="8" cy="4.9" r="0.95" fill="#4497cd"/></svg>
<span class="t" id="t40" style="font-size:13px;top:267.00px;color:#303030;-webkit-text-stroke:0.6px #303030;letter-spacing:0.485px;left:294.60px;">Total sales over time</span>
<svg class="b" style="left:294px;top:281px;" width="129" height="2" viewBox="0 0 129 2"><g transform="translate(0.60 0.00)"><path d="M0 0.9 H128.20" stroke="#c2c2c2" stroke-width="1.8" stroke-dasharray="1.7 1.55"/></g></svg>
<span class="t" id="t41" style="font-size:20.5px;top:295.00px;color:#303030;-webkit-text-stroke:0.45px #303030;letter-spacing:-0.545px;left:272.10px;">$27,178.64</span>
<svg class="b" style="left:379px;top:302px;" width="6" height="7" viewBox="0 0 6 7"><g transform="translate(0.10 0.40)"><path d="M0.9 4.90 L4.50 1.3" fill="none" stroke="#0c7d52" stroke-width="1.55" stroke-linecap="round"/><path d="M1.5 0.8 H5.00 V4.30" fill="none" stroke="#0c7d52" stroke-width="1.65" stroke-linecap="butt" stroke-linejoin="miter"/></g></svg>
<span class="t" id="t42" style="font-size:11.5px;top:301.00px;color:#0c7d52;font-weight:700;letter-spacing:0.493px;left:389.10px;">203%</span>
<svg class="b" style="left:256px;top:320px;" width="1080" height="240" viewBox="0 0 1080 240"><path d="M62.0 17.5 H1067.0" stroke="#f0f0f1" stroke-width="1"/><path d="M62.0 70.5 H1067.0" stroke="#f0f0f1" stroke-width="1"/><path d="M62.0 123.5 H1067.0" stroke="#f0f0f1" stroke-width="1"/><path d="M62.0 176.5 H1067.0" stroke="#f0f0f1" stroke-width="1"/><path d="M62.0 229.5 H1067.0" stroke="#f0f0f1" stroke-width="1"/><defs><linearGradient id="mg" gradientUnits="userSpaceOnUse" x1="0" y1="44" x2="0" y2="230"><stop offset="0" stop-color="#3a9ad0" stop-opacity=".055"/><stop offset="1" stop-color="#3a9ad0" stop-opacity="0"/></linearGradient></defs><path d="M62.70 44.10C65.07 44.35 72.17 44.17 76.90 45.60C81.63 47.03 86.35 48.90 91.10 52.70C95.85 56.50 100.65 63.32 105.40 68.40C110.15 73.48 114.85 79.75 119.60 83.20C124.35 86.65 128.67 87.78 133.90 89.10C139.13 90.42 145.78 89.57 151.00 91.10C156.22 92.63 160.93 94.50 165.20 98.30C169.47 102.10 173.28 107.50 176.60 113.90C179.92 120.30 182.25 128.63 185.10 136.70C187.95 144.77 190.85 154.70 193.70 162.30C196.55 169.90 198.88 176.37 202.20 182.30C205.52 188.23 209.80 194.35 213.60 197.90C217.40 201.45 220.73 202.65 225.00 203.60C229.27 204.55 233.98 204.07 239.20 203.60C244.42 203.13 250.60 202.45 256.30 200.80C262.00 199.15 268.17 195.70 273.40 193.70C278.63 191.70 281.05 189.85 287.70 188.80C294.35 187.75 304.28 187.30 313.30 187.40C322.32 187.50 332.30 188.22 341.80 189.40C351.30 190.58 360.82 193.42 370.30 194.50C379.78 195.58 389.22 195.67 398.70 195.90C408.18 196.13 417.70 195.60 427.20 195.90C436.70 196.20 446.20 197.32 455.70 197.70C465.20 198.08 474.70 198.07 484.20 198.20C493.70 198.33 501.27 198.33 512.70 198.50C524.13 198.67 540.48 199.27 552.80 199.20C565.12 199.13 575.97 198.85 586.60 198.10C597.23 197.35 606.60 195.45 616.60 194.70C626.60 193.95 637.22 193.53 646.60 193.60C655.98 193.67 663.52 193.72 672.90 195.10C682.28 196.48 693.52 200.33 702.90 201.90C712.28 203.47 720.75 204.50 729.20 204.50C737.65 204.50 746.72 204.08 753.60 201.90C760.48 199.72 764.57 195.53 770.50 191.40C776.43 187.27 781.70 180.10 789.20 177.10C796.70 174.10 807.37 173.83 815.50 173.40C823.63 172.97 829.25 173.25 838.00 174.50C846.75 175.75 857.37 179.53 868.00 180.90C878.63 182.27 891.17 182.52 901.80 182.70C912.43 182.88 921.80 182.43 931.80 182.00C941.80 181.57 953.05 180.48 961.80 180.10C970.55 179.72 977.42 179.27 984.30 179.70C991.18 180.13 997.47 180.75 1003.10 182.70C1008.73 184.65 1013.10 187.77 1018.10 191.40C1023.10 195.03 1028.10 201.07 1033.10 204.50C1038.10 207.93 1042.47 210.32 1048.10 212.00C1053.73 213.68 1063.77 214.17 1066.90 214.60L1066.90 229.50L62.70 229.50Z" fill="url(#mg)"/><path d="M62.70 229.30C66.48 229.20 78.77 229.32 85.40 228.70C92.03 228.08 96.80 226.60 102.50 225.60C108.20 224.60 112.95 223.32 119.60 222.70C126.25 222.08 129.10 222.13 142.40 221.90C155.70 221.67 181.37 221.58 199.40 221.30C217.43 221.02 239.22 221.00 250.60 220.20C261.98 219.40 262.00 217.93 267.70 216.50C273.40 215.07 278.15 212.65 284.80 211.60C291.45 210.55 298.10 210.48 307.60 210.20C317.10 209.92 331.35 210.18 341.80 209.90C352.25 209.62 356.07 208.83 370.30 208.50C384.53 208.17 410.58 208.23 427.20 207.90C443.82 207.57 456.70 206.63 470.00 206.50C483.30 206.37 496.33 206.18 507.00 207.10C517.67 208.02 523.23 211.00 534.00 212.00C544.77 213.00 559.08 212.60 571.60 213.10C584.12 213.60 596.60 214.43 609.10 215.00C621.60 215.57 635.33 216.57 646.60 216.50C657.87 216.43 667.32 216.42 676.70 214.60C686.08 212.78 694.15 207.53 702.90 205.60C711.65 203.67 719.82 203.62 729.20 203.00C738.58 202.38 747.95 202.58 759.20 201.90C770.45 201.22 782.32 199.58 796.70 198.90C811.08 198.22 832.98 198.55 845.50 197.80C858.02 197.05 862.42 195.10 871.80 194.40C881.18 193.70 893.05 193.35 901.80 193.60C910.55 193.85 916.80 193.90 924.30 195.90C931.80 197.90 939.92 203.10 946.80 205.60C953.68 208.10 956.22 209.83 965.60 210.90C974.98 211.97 990.60 211.38 1003.10 212.00C1015.60 212.62 1029.97 214.03 1040.60 214.60C1051.23 215.17 1062.52 215.27 1066.90 215.40" fill="none" stroke="#94bfda" stroke-width="1.9" stroke-dasharray="0.1 3.9" stroke-linecap="round"/><path d="M62.70 44.10C65.07 44.35 72.17 44.17 76.90 45.60C81.63 47.03 86.35 48.90 91.10 52.70C95.85 56.50 100.65 63.32 105.40 68.40C110.15 73.48 114.85 79.75 119.60 83.20C124.35 86.65 128.67 87.78 133.90 89.10C139.13 90.42 145.78 89.57 151.00 91.10C156.22 92.63 160.93 94.50 165.20 98.30C169.47 102.10 173.28 107.50 176.60 113.90C179.92 120.30 182.25 128.63 185.10 136.70C187.95 144.77 190.85 154.70 193.70 162.30C196.55 169.90 198.88 176.37 202.20 182.30C205.52 188.23 209.80 194.35 213.60 197.90C217.40 201.45 220.73 202.65 225.00 203.60C229.27 204.55 233.98 204.07 239.20 203.60C244.42 203.13 250.60 202.45 256.30 200.80C262.00 199.15 268.17 195.70 273.40 193.70C278.63 191.70 281.05 189.85 287.70 188.80C294.35 187.75 304.28 187.30 313.30 187.40C322.32 187.50 332.30 188.22 341.80 189.40C351.30 190.58 360.82 193.42 370.30 194.50C379.78 195.58 389.22 195.67 398.70 195.90C408.18 196.13 417.70 195.60 427.20 195.90C436.70 196.20 446.20 197.32 455.70 197.70C465.20 198.08 474.70 198.07 484.20 198.20C493.70 198.33 501.27 198.33 512.70 198.50C524.13 198.67 540.48 199.27 552.80 199.20C565.12 199.13 575.97 198.85 586.60 198.10C597.23 197.35 606.60 195.45 616.60 194.70C626.60 193.95 637.22 193.53 646.60 193.60C655.98 193.67 663.52 193.72 672.90 195.10C682.28 196.48 693.52 200.33 702.90 201.90C712.28 203.47 720.75 204.50 729.20 204.50C737.65 204.50 746.72 204.08 753.60 201.90C760.48 199.72 764.57 195.53 770.50 191.40C776.43 187.27 781.70 180.10 789.20 177.10C796.70 174.10 807.37 173.83 815.50 173.40C823.63 172.97 829.25 173.25 838.00 174.50C846.75 175.75 857.37 179.53 868.00 180.90C878.63 182.27 891.17 182.52 901.80 182.70C912.43 182.88 921.80 182.43 931.80 182.00C941.80 181.57 953.05 180.48 961.80 180.10C970.55 179.72 977.42 179.27 984.30 179.70C991.18 180.13 997.47 180.75 1003.10 182.70C1008.73 184.65 1013.10 187.77 1018.10 191.40C1023.10 195.03 1028.10 201.07 1033.10 204.50C1038.10 207.93 1042.47 210.32 1048.10 212.00C1053.73 213.68 1063.77 214.17 1066.90 214.60" fill="none" stroke="#3a9ad0" stroke-width="2.2" stroke-linecap="round" stroke-linejoin="round"/></svg>
<span class="t" id="t43" style="font-size:11.3px;top:332.00px;color:#616161;letter-spacing:0.066px;left:274.60px;">$8T</span>
<span class="t" id="t44" style="font-size:11.3px;top:385.00px;color:#616161;letter-spacing:0.216px;left:274.60px;">$6T</span>
<span class="t" id="t45" style="font-size:11.3px;top:438.00px;color:#616161;letter-spacing:0.366px;left:274.60px;">$4T</span>
<span class="t" id="t46" style="font-size:11.3px;top:491.00px;color:#616161;letter-spacing:0.216px;left:274.60px;">$2T</span>
<span class="t" id="t47" style="font-size:11.3px;top:544.00px;color:#616161;letter-spacing:0.222px;left:274.60px;">$0</span>
<span class="t" id="t48" style="font-size:11.3px;top:566.00px;color:#616161;letter-spacing:0.325px;left:318.40px;transform:translateX(-50%);margin-left:0.16px;">May 2024</span>
<span class="t" id="t49" style="font-size:11.3px;top:566.00px;color:#616161;letter-spacing:0.417px;left:402.10px;transform:translateX(-50%);margin-left:0.21px;">Jun 2024</span>
<span class="t" id="t50" style="font-size:11.3px;top:566.00px;color:#616161;letter-spacing:0.383px;left:485.80px;transform:translateX(-50%);margin-left:0.19px;">Jul 2024</span>
<span class="t" id="t51" style="font-size:11.3px;top:566.00px;color:#616161;letter-spacing:0.361px;left:569.50px;transform:translateX(-50%);margin-left:0.18px;">Aug 2024</span>
<span class="t" id="t52" style="font-size:11.3px;top:566.00px;color:#616161;letter-spacing:0.361px;left:653.20px;transform:translateX(-50%);margin-left:0.18px;">Sept 2024</span>
<span class="t" id="t53" style="font-size:11.3px;top:566.00px;color:#616161;letter-spacing:0.363px;left:736.90px;transform:translateX(-50%);margin-left:0.18px;">Oct 2024</span>
<span class="t" id="t54" style="font-size:11.3px;top:566.00px;color:#616161;letter-spacing:0.363px;left:820.60px;transform:translateX(-50%);margin-left:0.18px;">Nov 2024</span>
<span class="t" id="t55" style="font-size:11.3px;top:566.00px;color:#616161;letter-spacing:0.363px;left:904.30px;transform:translateX(-50%);margin-left:0.18px;">Dec 2024</span>
<span class="t" id="t56" style="font-size:11.3px;top:566.00px;color:#616161;letter-spacing:0.417px;left:988.00px;transform:translateX(-50%);margin-left:0.21px;">Jan 2025</span>
<span class="t" id="t57" style="font-size:11.3px;top:566.00px;color:#616161;letter-spacing:0.236px;left:1071.70px;transform:translateX(-50%);margin-left:0.12px;">Feb 2025</span>
<span class="t" id="t58" style="font-size:11.3px;top:566.00px;color:#616161;letter-spacing:0.452px;left:1155.40px;transform:translateX(-50%);margin-left:0.23px;">Mar 2025</span>
<span class="t" id="t59" style="font-size:11.3px;top:566.00px;color:#616161;letter-spacing:0.434px;left:1239.10px;transform:translateX(-50%);margin-left:0.22px;">Apr 2025</span>
<div class="b" style="left:629px;top:607.2px;width:12.5px;height:2px;background:#3a9ad0;border-radius:1px;"></div>
<span class="t" id="t60" style="font-size:11.3px;top:603.00px;color:#616161;letter-spacing:0.094px;left:647.30px;">13 May 2024–12 May 2025</span>
<svg class="b" style="left:803px;top:606px;" width="14" height="4" viewBox="0 0 14 4"><path d="M1.5 2 H13" stroke="#94bfda" stroke-width="1.8" stroke-dasharray="0.1 4.4" stroke-linecap="round"/></svg>
<span class="t" id="t61" style="font-size:11.3px;top:603.00px;color:#616161;letter-spacing:0.094px;left:822.30px;">14 May 2023–12 May 2024</span>
<div class="card" style="left:1359px;top:247px;width:535px;height:388px"></div>
<span class="t" id="t62" style="font-size:13px;top:266.00px;color:#303030;-webkit-text-stroke:0.6px #303030;letter-spacing:0.558px;left:1375.40px;">Total sales breakdown</span>
<svg class="b" style="left:1375px;top:280px;" width="141" height="2" viewBox="0 0 141 2"><g transform="translate(0.40 0.00)"><path d="M0 0.9 H139.80" stroke="#c2c2c2" stroke-width="1.8" stroke-dasharray="1.7 1.55"/></g></svg>
<div class="b" style="left:1375px;top:291.5px;width:502.7px;height:36.5px;background:#f7f7f7;border-radius:8px;"></div>
<span class="t" id="t63" style="font-size:13px;top:304.00px;color:#4555aa;letter-spacing:0.216px;left:1387.50px;">Gross sales</span>
<span class="t" id="t64" style="font-size:13px;top:304.00px;color:#303030;letter-spacing:0.614px;right:100.94px;">$30,749.20</span>
<svg class="b" style="left:1825px;top:307px;" width="7" height="7" viewBox="0 0 7 7"><g transform="translate(0.85 0.40)"><path d="M0.9 4.90 L4.50 1.3" fill="none" stroke="#0c7d52" stroke-width="1.55" stroke-linecap="round"/><path d="M1.5 0.8 H5.00 V4.30" fill="none" stroke="#0c7d52" stroke-width="1.65" stroke-linecap="butt" stroke-linejoin="miter"/></g></svg>
<span class="t" id="t65" style="font-size:11.5px;top:306.00px;color:#0c7d52;font-weight:700;letter-spacing:-0.641px;left:1835.85px;">178%</span>
<div class="b" style="left:1375px;top:333.1px;width:502.7px;height:36.5px;background:#f7f7f7;border-radius:8px;"></div>
<span class="t" id="t66" style="font-size:13px;top:345.00px;color:#4555aa;letter-spacing:0.440px;left:1387.50px;">Discounts</span>
<span class="t" id="t67" style="font-size:13px;top:345.00px;color:#303030;letter-spacing:0.459px;right:100.64px;">-$2,615.39</span>
<svg class="b" style="left:1826px;top:348px;" width="7" height="7" viewBox="0 0 7 7"><g transform="translate(0.30 0.60)"><path d="M0.9 0.9 L4.50 4.50" fill="none" stroke="#4a4a4a" stroke-width="1.55" stroke-linecap="round"/><path d="M1.5 5.00 H5.00 V1.5" fill="none" stroke="#4a4a4a" stroke-width="1.65" stroke-linecap="butt" stroke-linejoin="miter"/></g></svg>
<span class="t" id="t68" style="font-size:11.5px;top:347.00px;color:#4a4a4a;font-weight:700;letter-spacing:-0.727px;left:1836.30px;">311%</span>
<div class="b" style="left:1375px;top:374.7px;width:502.7px;height:36.5px;background:#f7f7f7;border-radius:8px;"></div>
<span class="t" id="t69" style="font-size:13px;top:387.00px;color:#4555aa;letter-spacing:0.278px;left:1387.50px;">Returns</span>
<span class="t" id="t70" style="font-size:13px;top:387.00px;color:#303030;letter-spacing:0.459px;right:98.49px;">-$1,542.74</span>
<svg class="b" style="left:1828px;top:390px;" width="7" height="7" viewBox="0 0 7 7"><g transform="translate(0.45 0.60)"><path d="M0.9 0.9 L4.50 4.50" fill="none" stroke="#0c7d52" stroke-width="1.55" stroke-linecap="round"/><path d="M1.5 5.00 H5.00 V1.5" fill="none" stroke="#0c7d52" stroke-width="1.65" stroke-linecap="butt" stroke-linejoin="miter"/></g></svg>
<span class="t" id="t71" style="font-size:11.5px;top:389.00px;color:#0c7d52;font-weight:700;letter-spacing:-0.366px;left:1838.45px;">10%</span>
<div class="b" style="left:1375px;top:416.3px;width:502.7px;height:36.5px;background:#f7f7f7;border-radius:8px;"></div>
<span class="t" id="t72" style="font-size:13px;top:429.00px;color:#4555aa;letter-spacing:0.350px;left:1387.50px;">Net sales</span>
<span class="t" id="t73" style="font-size:13px;top:429.00px;color:#303030;letter-spacing:0.214px;right:103.19px;">$26,591.07</span>
<svg class="b" style="left:1824px;top:432px;" width="6" height="7" viewBox="0 0 6 7"><g transform="translate(0.00 0.40)"><path d="M0.9 4.90 L4.50 1.3" fill="none" stroke="#0c7d52" stroke-width="1.55" stroke-linecap="round"/><path d="M1.5 0.8 H5.00 V4.30" fill="none" stroke="#0c7d52" stroke-width="1.65" stroke-linecap="butt" stroke-linejoin="miter"/></g></svg>
<span class="t" id="t74" style="font-size:11.5px;top:431.00px;color:#0c7d52;font-weight:700;letter-spacing:0.593px;left:1834.00px;">205%</span>
<div class="b" style="left:1375px;top:457.9px;width:502.7px;height:36.5px;background:#f7f7f7;border-radius:8px;"></div>
<span class="t" id="t75" style="font-size:13px;top:470.00px;color:#4555aa;letter-spacing:0.449px;left:1387.50px;">Shipping charges</span>
<span class="t" id="t76" style="font-size:13px;top:470.00px;color:#303030;letter-spacing:0.300px;right:101.00px;">$427.07</span>
<svg class="b" style="left:1826px;top:473px;" width="6" height="7" viewBox="0 0 6 7"><g transform="translate(0.10 0.40)"><path d="M0.9 4.90 L4.50 1.3" fill="none" stroke="#0c7d52" stroke-width="1.55" stroke-linecap="round"/><path d="M1.5 0.8 H5.00 V4.30" fill="none" stroke="#0c7d52" stroke-width="1.65" stroke-linecap="butt" stroke-linejoin="miter"/></g></svg>
<span class="t" id="t77" style="font-size:11.5px;top:472.00px;color:#0c7d52;font-weight:700;letter-spacing:-0.594px;left:1836.10px;">110%</span>
<div class="b" style="left:1375px;top:499.5px;width:502.7px;height:36.5px;background:#f7f7f7;border-radius:8px;"></div>
<span class="t" id="t78" style="font-size:13px;top:512.00px;color:#4555aa;letter-spacing:0.300px;left:1387.50px;">Return fees</span>
<span class="t" id="t79" style="font-size:13px;top:512.00px;color:#303030;letter-spacing:0.913px;right:100.29px;">$0.00</span>
<div class="b" style="left:1841px;top:517.6px;width:11px;height:1.4px;background:#8a8a8a;"></div>
<div class="b" style="left:1375px;top:541.1px;width:502.7px;height:36.5px;background:#f7f7f7;border-radius:8px;"></div>
<span class="t" id="t80" style="font-size:13px;top:554.00px;color:#4555aa;letter-spacing:0.408px;left:1387.50px;">Taxes</span>
<span class="t" id="t81" style="font-size:13px;top:554.00px;color:#303030;letter-spacing:0.350px;right:103.05px;">$160.50</span>
<svg class="b" style="left:1824px;top:557px;" width="6" height="7" viewBox="0 0 6 7"><g transform="translate(0.00 0.40)"><path d="M0.9 4.90 L4.50 1.3" fill="none" stroke="#8a8a8a" stroke-width="1.55" stroke-linecap="round"/><path d="M1.5 0.8 H5.00 V4.30" fill="none" stroke="#8a8a8a" stroke-width="1.65" stroke-linecap="butt" stroke-linejoin="miter"/></g></svg>
<span class="t" id="t82" style="font-size:11.5px;top:556.00px;color:#8a8a8a;font-weight:700;letter-spacing:0.593px;left:1834.00px;">293%</span>
<div class="b" style="left:1375px;top:582.7px;width:502.7px;height:36.5px;background:#f7f7f7;border-radius:8px;"></div>
<span class="t" id="t83" style="font-size:13px;top:595.00px;color:#4555aa;letter-spacing:0.358px;left:1387.50px;">Total sales</span>
<span class="t" id="t84" style="font-size:13px;top:595.00px;color:#303030;letter-spacing:-0.109px;right:103.51px;">$27,178.64</span>
<svg class="b" style="left:1824px;top:598px;" width="6" height="7" viewBox="0 0 6 7"><g transform="translate(0.00 0.40)"><path d="M0.9 4.90 L4.50 1.3" fill="none" stroke="#0c7d52" stroke-width="1.55" stroke-linecap="round"/><path d="M1.5 0.8 H5.00 V4.30" fill="none" stroke="#0c7d52" stroke-width="1.65" stroke-linecap="butt" stroke-linejoin="miter"/></g></svg>
<span class="t" id="t85" style="font-size:11.5px;top:597.00px;color:#0c7d52;font-weight:700;letter-spacing:0.593px;left:1834.00px;">203%</span>
<div class="card" style="left:256px;top:652px;width:535px;height:254px"></div>
<svg class="b" style="left:271px;top:671px;" width="16" height="16" viewBox="0 0 16 16"><circle cx="8" cy="8" r="6.2" fill="none" stroke="#4497cd" stroke-width="1.6"/><path d="M8 7.3 V11.1" stroke="#4497cd" stroke-width="1.5" stroke-linecap="round"/><circle cx="8" cy="4.9" r="0.95" fill="#4497cd"/></svg>
<span class="t" id="t86" style="font-size:13px;top:672.00px;color:#303030;-webkit-text-stroke:0.6px #303030;letter-spacing:0.494px;left:294.40px;">Total sales by sales channel</span>
<svg class="b" style="left:294px;top:686px;" width="176" height="2" viewBox="0 0 176 2"><g transform="translate(0.40 0.00)"><path d="M0 0.9 H175.20" stroke="#c2c2c2" stroke-width="1.8" stroke-dasharray="1.7 1.55"/></g></svg>
<svg class="b" style="left:290px;top:700px;" width="192" height="188" viewBox="0 0 192 188"><path d="M98.77 8.24A85.8 85.8 0 0 1 157.14 154.19L146.10 143.32A70.3 70.3 0 0 0 98.27 23.74Z" fill="#2fa8ea" stroke="#2fa8ea" stroke-width="2.6" stroke-linejoin="round"/><path d="M153.13 158.01A85.8 85.8 0 0 1 28.16 146.53L40.41 137.04A70.3 70.3 0 0 0 142.81 146.45Z" fill="#7b2ae0" stroke="#7b2ae0" stroke-width="2.6" stroke-linejoin="round"/><path d="M24.91 142.04A85.8 85.8 0 0 1 19.45 55.25L33.28 62.25A70.3 70.3 0 0 0 37.75 133.36Z" fill="#6d7be6" stroke="#6d7be6" stroke-width="2.6" stroke-linejoin="round"/><path d="M22.11 50.39A85.8 85.8 0 0 1 44.30 25.52L53.64 37.89A70.3 70.3 0 0 0 35.46 58.27Z" fill="#d83aa9" stroke="#d83aa9" stroke-width="2.6" stroke-linejoin="round"/><path d="M48.83 22.33A85.8 85.8 0 0 1 72.85 11.38L77.04 26.31A70.3 70.3 0 0 0 57.35 35.28Z" fill="#1fb5b1" stroke="#1fb5b1" stroke-width="2.6" stroke-linejoin="round"/><path d="M78.23 10.06A85.8 85.8 0 0 1 85.17 8.89L87.13 24.26A70.3 70.3 0 0 0 81.44 25.22Z" fill="#a128d8" stroke="#a128d8" stroke-width="2.6" stroke-linejoin="round"/><path d="M90.69 8.36A85.8 85.8 0 0 1 93.23 8.24L93.73 23.74A70.3 70.3 0 0 0 91.65 23.83Z" fill="#b48cec" stroke="#b48cec" stroke-width="2.6" stroke-linejoin="round"/></svg>
<span class="t" id="t87" style="font-size:20.5px;top:776.00px;color:#202020;-webkit-text-stroke:0.45px #202020;letter-spacing:-0.166px;left:386.00px;transform:translateX(-50%);margin-left:-0.08px;">$27.2T</span>
<svg class="b" style="left:364px;top:803px;" width="7" height="7" viewBox="0 0 7 7"><g transform="translate(0.10 0.40)"><path d="M0.9 5.00 L4.60 1.3" fill="none" stroke="#0c7d52" stroke-width="1.55" stroke-linecap="round"/><path d="M1.5 0.8 H5.10 V4.40" fill="none" stroke="#0c7d52" stroke-width="1.65" stroke-linecap="butt" stroke-linejoin="miter"/></g></svg>
<span class="t" id="t88" style="font-size:11.8px;top:802.00px;color:#0c7d52;font-weight:700;letter-spacing:0.538px;left:373.80px;">203%</span>
<div class="b" style="left:503px;top:732.6px;width:12px;height:12px;background:#2fa8ea;border-radius:2px;"></div>
<span class="t" id="t89" style="font-size:12px;top:733.00px;color:#616161;letter-spacing:0.367px;left:518.20px;">Marketplace Conn...</span>
<span class="t" id="t90" style="font-size:12px;top:733.00px;color:#616161;letter-spacing:0.088px;right:1211.61px;">$10.3T</span>
<svg class="b" style="left:711px;top:736px;" width="6" height="6" viewBox="0 0 6 6"><g transform="translate(0.90 0.60)"><path d="M0.9 4.10 L3.70 1.3" fill="none" stroke="#0c7d52" stroke-width="1.4" stroke-linecap="round"/><path d="M1.5 0.8 H4.20 V3.50" fill="none" stroke="#0c7d52" stroke-width="1.5" stroke-linecap="butt" stroke-linejoin="miter"/></g></svg>
<span class="t" id="t91" style="font-size:9.2px;top:736.00px;color:#0c7d52;font-weight:700;letter-spacing:0.505px;left:720.30px;">2.3K%</span>
<div class="b" style="left:503px;top:760.6px;width:12px;height:12px;background:#7b2ae0;border-radius:2px;"></div>
<span class="t" id="t92" style="font-size:12px;top:761.00px;color:#616161;letter-spacing:0.209px;left:518.20px;">Online Store</span>
<span class="t" id="t93" style="font-size:12px;top:761.00px;color:#616161;letter-spacing:0.228px;right:1211.47px;">$7.4T</span>
<svg class="b" style="left:711px;top:763px;" width="7" height="7" viewBox="0 0 7 7"><g transform="translate(0.90 0.80)"><path d="M0.9 4.70 L4.30 1.3" fill="none" stroke="#0c7d52" stroke-width="1.4" stroke-linecap="round"/><path d="M1.5 0.8 H4.80 V4.10" fill="none" stroke="#0c7d52" stroke-width="1.5" stroke-linecap="butt" stroke-linejoin="miter"/></g></svg>
<span class="t" id="t94" style="font-size:11px;top:762.00px;color:#0c7d52;font-weight:700;letter-spacing:-0.466px;left:722.10px;">21%</span>
<div class="b" style="left:503px;top:788.6px;width:12px;height:12px;background:#6d7be6;border-radius:2px;"></div>
<span class="t" id="t95" style="font-size:12px;top:789.00px;color:#616161;letter-spacing:0.431px;left:518.20px;">Appstle Subscription</span>
<span class="t" id="t96" style="font-size:12px;top:789.00px;color:#616161;letter-spacing:0.678px;right:1211.02px;">$4.9T</span>
<svg class="b" style="left:711px;top:791px;" width="7" height="7" viewBox="0 0 7 7"><g transform="translate(0.90 0.80)"><path d="M0.9 4.70 L4.30 1.3" fill="none" stroke="#0c7d52" stroke-width="1.4" stroke-linecap="round"/><path d="M1.5 0.8 H4.80 V4.10" fill="none" stroke="#0c7d52" stroke-width="1.5" stroke-linecap="butt" stroke-linejoin="miter"/></g></svg>
<span class="t" id="t97" style="font-size:11px;top:790.00px;color:#0c7d52;font-weight:700;letter-spacing:-0.114px;left:722.10px;">199%</span>
<div class="b" style="left:503px;top:816.6px;width:12px;height:12px;background:#d83aa9;border-radius:2px;"></div>
<span class="t" id="t98" style="font-size:12px;top:817.00px;color:#616161;letter-spacing:0.156px;left:518.20px;">Shop</span>
<span class="t" id="t99" style="font-size:12px;top:817.00px;color:#616161;letter-spacing:0.003px;right:1211.70px;">$1.9T</span>
<svg class="b" style="left:711px;top:820px;" width="6" height="6" viewBox="0 0 6 6"><g transform="translate(0.90 0.60)"><path d="M0.9 4.10 L3.70 1.3" fill="none" stroke="#0c7d52" stroke-width="1.4" stroke-linecap="round"/><path d="M1.5 0.8 H4.20 V3.50" fill="none" stroke="#0c7d52" stroke-width="1.5" stroke-linecap="butt" stroke-linejoin="miter"/></g></svg>
<span class="t" id="t100" style="font-size:9.2px;top:820.00px;color:#0c7d52;font-weight:700;letter-spacing:0.505px;left:720.30px;">3.2K%</span>
<span class="t" id="t101" style="font-size:12px;top:852.00px;color:#616161;letter-spacing:-0.193px;left:508.40px;">+4 more</span>
<div class="card" style="left:807px;top:652px;width:535px;height:254px"></div>
<span class="t" id="t102" style="font-size:13px;top:671.00px;color:#303030;-webkit-text-stroke:0.6px #303030;letter-spacing:0.503px;left:823.10px;">Average order value over time</span>
<svg class="b" style="left:823px;top:685px;" width="189" height="2" viewBox="0 0 189 2"><g transform="translate(0.10 0.00)"><path d="M0 0.9 H188.00" stroke="#c2c2c2" stroke-width="1.8" stroke-dasharray="1.7 1.55"/></g></svg>
<span class="t" id="t103" style="font-size:20.5px;top:698.00px;color:#303030;-webkit-text-stroke:0.45px #303030;letter-spacing:0.739px;left:823.10px;">$28.59</span>
<svg class="b" style="left:897px;top:705px;" width="7" height="7" viewBox="0 0 7 7"><g transform="translate(0.80 0.60)"><path d="M0.9 0.9 L4.50 4.50" fill="none" stroke="#4f4f4f" stroke-width="1.55" stroke-linecap="round"/><path d="M1.5 5.00 H5.00 V1.5" fill="none" stroke="#4f4f4f" stroke-width="1.65" stroke-linecap="butt" stroke-linejoin="miter"/></g></svg>
<span class="t" id="t104" style="font-size:11.5px;top:704.00px;color:#4f4f4f;font-weight:700;letter-spacing:0.275px;left:907.80px;">9%</span>
<svg class="b" style="left:807px;top:725px;" width="530" height="110" viewBox="0 0 530 110"><path d="M62.6 16.0 H515.0" stroke="#f0f0f1" stroke-width="1"/><path d="M62.6 95.2 H515.0" stroke="#f0f0f1" stroke-width="1"/><defs><linearGradient id="ag" x1="0" y1="0" x2="0" y2="1"><stop offset="0" stop-color="#3a9ad0" stop-opacity=".07"/><stop offset="1" stop-color="#3a9ad0" stop-opacity=".0"/></linearGradient></defs><path d="M62.60 76.40C66.87 76.45 80.18 76.83 88.20 76.70C96.22 76.57 103.83 76.35 110.70 75.60C117.57 74.85 123.78 72.95 129.40 72.20C135.02 71.45 140.02 71.97 144.40 71.10C148.78 70.23 151.93 68.63 155.70 67.00C159.47 65.37 163.25 62.50 167.00 61.30C170.75 60.10 174.45 59.67 178.20 59.80C181.95 59.93 185.75 60.72 189.50 62.10C193.25 63.48 196.95 66.53 200.70 68.10C204.45 69.67 206.98 70.93 212.00 71.50C217.02 72.07 222.05 71.45 230.80 71.50C239.55 71.55 253.88 71.75 264.50 71.80C275.12 71.85 285.73 71.98 294.50 71.80C303.27 71.62 310.22 70.82 317.10 70.70C323.98 70.58 329.55 70.53 335.80 71.10C342.05 71.67 349.60 73.48 354.60 74.10C359.60 74.72 362.05 75.18 365.80 74.80C369.55 74.42 373.65 73.92 377.10 71.80C380.55 69.68 383.37 64.85 386.50 62.10C389.63 59.35 393.08 56.62 395.90 55.30C398.72 53.98 400.60 53.95 403.40 54.20C406.20 54.45 409.58 55.17 412.70 56.80C415.82 58.43 419.28 62.05 422.10 64.00C424.92 65.95 426.47 67.45 429.60 68.50C432.73 69.55 436.52 70.25 440.90 70.30C445.28 70.35 450.90 69.35 455.90 68.80C460.90 68.25 465.90 67.25 470.90 67.00C475.90 66.75 480.90 66.50 485.90 67.30C490.90 68.10 496.08 70.73 500.90 71.80C505.72 72.87 512.48 73.38 514.80 73.70L514.80 95.00L62.60 95.00Z" fill="url(#ag)"/><path d="M62.60 79.40C64.37 78.90 70.18 78.47 73.20 76.40C76.22 74.33 77.90 69.82 80.70 67.00C83.50 64.18 86.57 61.07 90.00 59.50C93.43 57.93 96.60 57.60 101.30 57.60C106.00 57.60 112.88 58.82 118.20 59.50C123.52 60.18 128.20 61.20 133.20 61.70C138.20 62.20 143.82 61.75 148.20 62.50C152.58 63.25 155.12 65.27 159.50 66.20C163.88 67.13 169.50 67.92 174.50 68.10C179.50 68.28 184.50 67.73 189.50 67.30C194.50 66.87 199.50 65.75 204.50 65.50C209.50 65.25 214.50 65.05 219.50 65.80C224.50 66.55 229.50 68.87 234.50 70.00C239.50 71.13 239.50 72.17 249.50 72.60C259.50 73.03 285.12 73.23 294.50 72.60C303.88 71.97 302.03 70.30 305.80 68.80C309.57 67.30 313.35 64.65 317.10 63.60C320.85 62.55 324.55 62.32 328.30 62.50C332.05 62.68 335.22 63.45 339.60 64.70C343.98 65.95 348.98 68.82 354.60 70.00C360.22 71.18 366.42 71.25 373.30 71.80C380.18 72.35 389.63 73.10 395.90 73.30C402.17 73.50 405.90 73.75 410.90 73.00C415.90 72.25 420.90 69.75 425.90 68.80C430.90 67.85 436.53 67.30 440.90 67.30C445.27 67.30 447.73 67.67 452.10 68.80C456.47 69.93 461.47 73.03 467.10 74.10C472.73 75.17 477.95 74.70 485.90 75.20C493.85 75.70 509.98 76.78 514.80 77.10" fill="none" stroke="#94bfda" stroke-width="1.9" stroke-dasharray="0.1 3.9" stroke-linecap="round"/><path d="M62.60 76.40C66.87 76.45 80.18 76.83 88.20 76.70C96.22 76.57 103.83 76.35 110.70 75.60C117.57 74.85 123.78 72.95 129.40 72.20C135.02 71.45 140.02 71.97 144.40 71.10C148.78 70.23 151.93 68.63 155.70 67.00C159.47 65.37 163.25 62.50 167.00 61.30C170.75 60.10 174.45 59.67 178.20 59.80C181.95 59.93 185.75 60.72 189.50 62.10C193.25 63.48 196.95 66.53 200.70 68.10C204.45 69.67 206.98 70.93 212.00 71.50C217.02 72.07 222.05 71.45 230.80 71.50C239.55 71.55 253.88 71.75 264.50 71.80C275.12 71.85 285.73 71.98 294.50 71.80C303.27 71.62 310.22 70.82 317.10 70.70C323.98 70.58 329.55 70.53 335.80 71.10C342.05 71.67 349.60 73.48 354.60 74.10C359.60 74.72 362.05 75.18 365.80 74.80C369.55 74.42 373.65 73.92 377.10 71.80C380.55 69.68 383.37 64.85 386.50 62.10C389.63 59.35 393.08 56.62 395.90 55.30C398.72 53.98 400.60 53.95 403.40 54.20C406.20 54.45 409.58 55.17 412.70 56.80C415.82 58.43 419.28 62.05 422.10 64.00C424.92 65.95 426.47 67.45 429.60 68.50C432.73 69.55 436.52 70.25 440.90 70.30C445.28 70.35 450.90 69.35 455.90 68.80C460.90 68.25 465.90 67.25 470.90 67.00C475.90 66.75 480.90 66.50 485.90 67.30C490.90 68.10 496.08 70.73 500.90 71.80C505.72 72.87 512.48 73.38 514.80 73.70" fill="none" stroke="#3a9ad0" stroke-width="2.2" stroke-linecap="round" stroke-linejoin="round"/></svg>
<span class="t" id="t105" style="font-size:11.3px;top:735.00px;color:#616161;letter-spacing:0.020px;left:825.00px;">$100</span>
<span class="t" id="t106" style="font-size:11.3px;top:814.00px;color:#616161;letter-spacing:0.222px;left:825.00px;">$0</span>
<span class="t" id="t107" style="font-size:11.3px;top:836.00px;color:#616161;letter-spacing:0.325px;left:868.90px;transform:translateX(-50%);margin-left:0.16px;">May 2024</span>
<span class="t" id="t108" style="font-size:11.3px;top:836.00px;color:#616161;letter-spacing:0.383px;left:944.70px;transform:translateX(-50%);margin-left:0.19px;">Jul 2024</span>
<span class="t" id="t109" style="font-size:11.3px;top:836.00px;color:#616161;letter-spacing:0.361px;left:1020.10px;transform:translateX(-50%);margin-left:0.18px;">Sept 2024</span>
<span class="t" id="t110" style="font-size:11.3px;top:836.00px;color:#616161;letter-spacing:0.363px;left:1095.50px;transform:translateX(-50%);margin-left:0.18px;">Nov 2024</span>
<span class="t" id="t111" style="font-size:11.3px;top:836.00px;color:#616161;letter-spacing:0.417px;left:1171.00px;transform:translateX(-50%);margin-left:0.21px;">Jan 2025</span>
<span class="t" id="t112" style="font-size:11.3px;top:836.00px;color:#616161;letter-spacing:0.452px;left:1246.80px;transform:translateX(-50%);margin-left:0.23px;">Mar 2025</span>
<div class="b" style="left:904.4px;top:877px;width:12.5px;height:2px;background:#3a9ad0;border-radius:1px;"></div>
<span class="t" id="t113" style="font-size:11.3px;top:873.00px;color:#616161;letter-spacing:0.072px;left:922.60px;">13 May 2024–12 May 2025</span>
<svg class="b" style="left:1078px;top:876px;" width="14" height="4" viewBox="0 0 14 4"><path d="M1.5 2 H13" stroke="#94bfda" stroke-width="1.8" stroke-dasharray="0.1 4.4" stroke-linecap="round"/></svg>
<span class="t" id="t114" style="font-size:11.3px;top:873.00px;color:#616161;letter-spacing:0.072px;left:1097.70px;">14 May 2023–12 May 2024</span>
<div class="card" style="left:1359px;top:652px;width:535px;height:254px"></div>
<svg class="b" style="left:1374px;top:671px;" width="16" height="16" viewBox="0 0 16 16"><circle cx="8" cy="8" r="6.2" fill="none" stroke="#4497cd" stroke-width="1.6"/><path d="M8 7.3 V11.1" stroke="#4497cd" stroke-width="1.5" stroke-linecap="round"/><circle cx="8" cy="4.9" r="0.95" fill="#4497cd"/></svg>
<span class="t" id="t115" style="font-size:13px;top:672.00px;color:#303030;-webkit-text-stroke:0.6px #303030;letter-spacing:0.579px;left:1397.50px;">Total sales by product</span>
<svg class="b" style="left:1397px;top:686px;" width="139" height="2" viewBox="0 0 139 2"><g transform="translate(0.50 0.00)"><path d="M0 0.9 H137.90" stroke="#c2c2c2" stroke-width="1.8" stroke-dasharray="1.7 1.55"/></g></svg>
<span class="t" id="t116" style="font-size:11px;top:703.00px;color:#616161;letter-spacing:0.254px;left:1375.20px;">Grow Vitamin - Vitamin C Serum 1 fl. oz, Professional Facial Serum (30 ml) · Grow Vitamin · Ski...</span>
<svg class="b" style="left:1375px;top:718px;" width="365" height="35" viewBox="0 0 365 35"><path transform="translate(0.20 0.30)" d="M0 0H360.50Q363.00 0 363.00 2.5V29.80Q363.00 32.30 360.50 32.30H0Z" fill="#33a6ea"/></svg>
<span class="t" id="t117" style="font-size:11.5px;top:730.00px;color:#6d6d6d;letter-spacing:0.241px;left:1748.80px;">$2,090.28</span>
<svg class="b" style="left:1813px;top:731px;" width="6" height="7" viewBox="0 0 6 7"><g transform="translate(0.10 0.90)"><path d="M0.9 5.00 L4.60 1.3" fill="none" stroke="#0c7d52" stroke-width="1.55" stroke-linecap="round"/><path d="M1.5 0.8 H5.10 V4.40" fill="none" stroke="#0c7d52" stroke-width="1.65" stroke-linecap="butt" stroke-linejoin="miter"/></g></svg>
<span class="t" id="t118" style="font-size:11.5px;top:730.00px;color:#0c7d52;font-weight:700;letter-spacing:0.293px;left:1823.80px;">548%</span>
<svg class="b" style="left:1375px;top:753px;" width="58" height="35" viewBox="0 0 58 35"><path transform="translate(0.20 0.20)" d="M0 0H53.10Q55.60 0 55.60 2.5V29.80Q55.60 32.30 53.10 32.30H0Z" fill="#93c8e8"/></svg>
<span class="t" id="t119" style="font-size:11.5px;top:765.00px;color:#6d6d6d;letter-spacing:0.337px;left:1441.50px;">$322.33</span>
<span class="t" id="t120" style="font-size:11px;top:807.00px;color:#616161;letter-spacing:0.279px;left:1375.20px;">Gallbladder Formula · Grow Vitamin · Vitamins and Supplements</span>
<svg class="b" style="left:1375px;top:822px;" width="311" height="35" viewBox="0 0 311 35"><path transform="translate(0.20 0.30)" d="M0 0H306.20Q308.70 0 308.70 2.5V29.80Q308.70 32.30 306.20 32.30H0Z" fill="#33a6ea"/></svg>
<span class="t" id="t121" style="font-size:11.5px;top:834.00px;color:#6d6d6d;letter-spacing:-0.309px;left:1694.20px;">$1,777.24</span>
<svg class="b" style="left:1754px;top:835px;" width="7" height="7" viewBox="0 0 7 7"><g transform="translate(0.60 0.90)"><path d="M0.9 5.00 L4.60 1.3" fill="none" stroke="#0c7d52" stroke-width="1.55" stroke-linecap="round"/><path d="M1.5 0.8 H5.10 V4.40" fill="none" stroke="#0c7d52" stroke-width="1.65" stroke-linecap="butt" stroke-linejoin="miter"/></g></svg>
<span class="t" id="t122" style="font-size:11.5px;top:834.00px;color:#0c7d52;font-weight:700;letter-spacing:0.484px;left:1765.20px;">99%</span>
<svg class="b" style="left:1375px;top:857px;" width="157" height="35" viewBox="0 0 157 35"><path transform="translate(0.20 0.20)" d="M0 0H152.40Q154.90 0 154.90 2.5V29.80Q154.90 32.30 152.40 32.30H0Z" fill="#93c8e8"/></svg>
<span class="t" id="t123" style="font-size:11.5px;top:869.00px;color:#6d6d6d;letter-spacing:0.354px;left:1540.70px;">$893.99</span>
<div class="card" style="left:256px;top:922px;width:535px;height:60px"></div>
<span class="t" id="t124" style="font-size:13px;top:941.00px;color:#303030;font-weight:700;letter-spacing:-0.059px;left:272.10px;">Sessions over time</span>
<div class="card" style="left:807px;top:922px;width:535px;height:60px"></div>
<span class="t" id="t125" style="font-size:13px;top:941.00px;color:#303030;font-weight:700;letter-spacing:0.088px;left:823.10px;">Conversion rate over time</span>
<div class="card" style="left:1359px;top:922px;width:535px;height:60px"></div>
<span class="t" id="t126" style="font-size:13px;top:941.00px;color:#303030;font-weight:700;letter-spacing:0.053px;left:1375.40px;">Conversion rate breakdown</span>
<div class="b" style="left:1911.4px;top:66px;width:7.6px;height:255px;background:#f7f7f7;border-radius:3px;"></div>
<svg class="b" style="left:1912px;top:69px;" width="6" height="250" viewBox="0 0 6 250"><g transform="translate(0.10 0.00)"><rect x="0" y="0" width="5.8" height="249.6" rx="2.9" fill="#b3b3b3"/></g></svg>
<svg class="b" style="left:1911px;top:60px;" width="8" height="4" viewBox="0 0 8 4"><g transform="translate(0.50 0.00)"><path d="M0.6 3.8 L3.4 0.4 L6.2 3.8 Z" fill="#a6a6a6"/></g></svg>
<svg class="b" style="left:1911px;top:938px;" width="8" height="6" viewBox="0 0 8 6"><g transform="translate(0.90 0.70)"><path d="M0 0 H6.1 L3.05 4.3 Z" fill="#a3a3a3"/></g></svg>
<div class="b" style="left:0px;top:945px;width:1919px;height:1px;background:#eaeff6;"></div>
<div class="b" style="left:0px;top:946px;width:1919px;height:1px;background:#a9b1bd;"></div>
<div class="b" style="left:0px;top:947px;width:1919px;height:1px;background:#dde3ec;"></div>
</main>
</div></body></html>
